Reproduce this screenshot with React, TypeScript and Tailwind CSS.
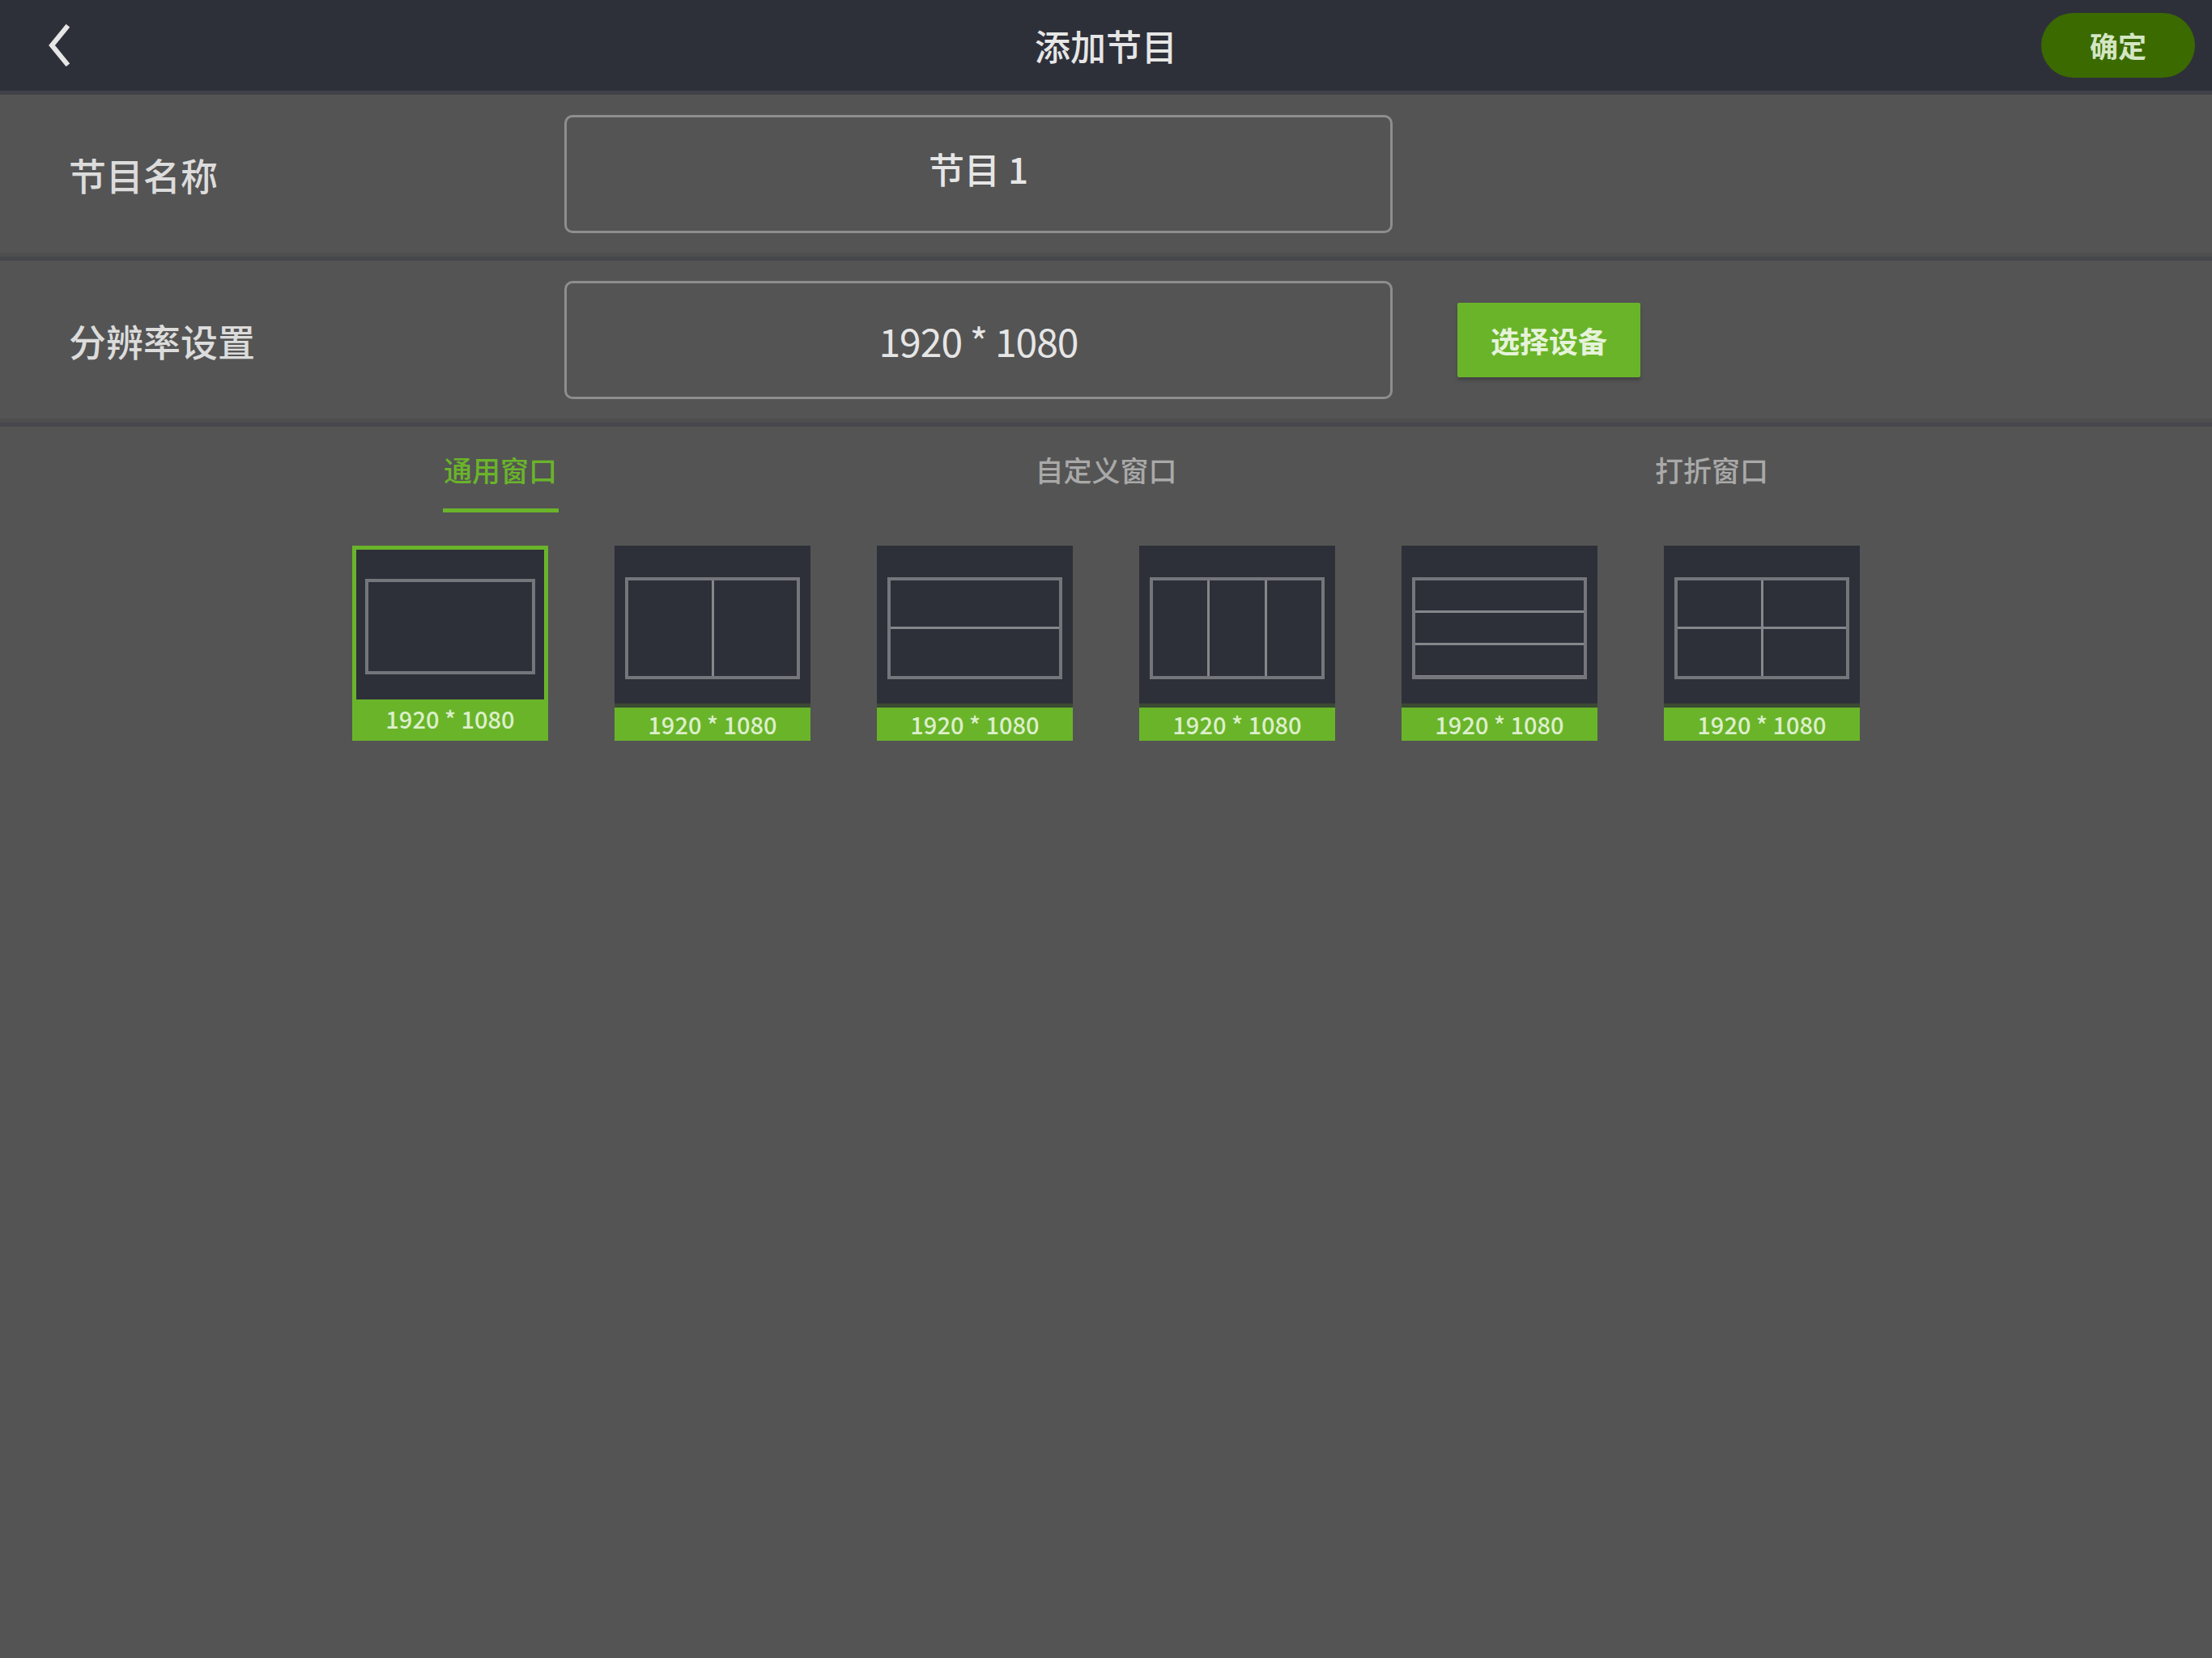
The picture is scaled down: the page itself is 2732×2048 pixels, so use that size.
import React, { useState } from 'react';

type Layout = 'single' | 'cols2' | 'rows2' | 'cols3' | 'rows3' | 'grid4';

const layouts: { id: Layout; cells: number; grid: string }[] = [
    { id: 'single', cells: 1, grid: 'grid-cols-1 grid-rows-1' },
    { id: 'cols2', cells: 2, grid: 'grid-cols-2 grid-rows-1' },
    { id: 'rows2', cells: 2, grid: 'grid-cols-1 grid-rows-2' },
    { id: 'cols3', cells: 3, grid: 'grid-cols-3 grid-rows-1' },
    { id: 'rows3', cells: 3, grid: 'grid-cols-1 grid-rows-3' },
    { id: 'grid4', cells: 4, grid: 'grid-cols-2 grid-rows-2' },
];

const tabs = ['通用窗口', '自定义窗口', '打折窗口'];

const LayoutCard = ({ layout, selected, onClick }: { layout: typeof layouts[number]; selected: boolean; onClick: () => void }) => {
    const rect = (
        <div className={`grid ${layout.grid} gap-[3px] bg-[#86878c] border-[4px] border-[#75767c] ${selected ? 'w-[210px] h-[118px]' : 'w-[216px] h-[126px]'}`}>
            {Array.from({ length: layout.cells }).map((_, i) => (
                <div key={i} className="bg-[#2e3039]" />
            ))}
        </div>
    );

    if (selected) {
        return (
            <button onClick={onClick} className="w-[242px] h-[241px] bg-[#6ab42a] px-[5px] pt-[5px] flex flex-col">
                <div className="h-[185px] bg-[#2e3039] flex items-center justify-center pt-[4px]">{rect}</div>
                <div className="flex-1 flex items-center justify-center text-[29px] font-medium leading-none text-[#dcefcb] pb-[4px]">1920 * 1080</div>
            </button>
        );
    }

    return (
        <button onClick={onClick} className="w-[242px] h-[241px] flex flex-col">
            <div className="h-[195px] bg-[#2e3039] flex items-center justify-center pt-[8px]">{rect}</div>
            <div className="h-[5px] bg-[#3b4a33]" />
            <div className="flex-1 bg-[#6ab42a] flex items-center justify-center text-[29px] font-medium leading-none text-[#dcefcb]">1920 * 1080</div>
        </button>
    );
};

export default function App() {
    const [activeTab, setActiveTab] = useState(0);
    const [selected, setSelected] = useState<Layout>('single');

    return (
        <div className="w-[2732px] h-[2048px] bg-[#545454] font-['Noto_Sans_CJK_SC','Noto_Sans',sans-serif] overflow-hidden">
            {/* Header */}
            <header className="h-[117px] bg-[#2e3039] border-b-[5px] border-[#404149] grid grid-cols-[1fr_auto_1fr] items-center">
                <button className="justify-self-start ml-[54px] w-[36px] h-[60px] flex items-center justify-center">
                    <svg width="30" height="52" viewBox="0 0 30 52" fill="none">
                        <polyline points="25,4 7,26 25,48" stroke="#e6e6e6" strokeWidth="6" strokeLinecap="square" />
                    </svg>
                </button>
                <h1 className="text-[44px] leading-none text-[#e6e6e6] font-medium">添加节目</h1>
                <button className="justify-self-end mr-[21px] w-[190px] h-[80px] rounded-full bg-[#3b6a00] text-[35px] font-bold text-[#d4e6c2]">
                    确定
                </button>
            </header>

            {/* Program name */}
            <div className="h-[195px] flex items-center">
                <span className="w-[697px] pl-[85px] text-[46px] font-medium text-[#dcdcdc] leading-none">节目名称</span>
                <div className="w-[1023px] h-[146px] border-[3px] border-[#8e8e8e] rounded-[10px] flex items-center justify-center pb-[14px]">
                    <span className="text-[44px] font-medium text-[#e6e6e6] leading-none">节目 1</span>
                </div>
            </div>
            <div className="h-[5px] bg-[#4e4e4e]" />
            <div className="h-[5px] bg-[#46474c]" />

            {/* Resolution */}
            <div className="h-[195px] flex items-center">
                <span className="w-[697px] pl-[85px] text-[46px] font-medium text-[#dcdcdc] leading-none">分辨率设置</span>
                <div className="w-[1023px] h-[146px] border-[3px] border-[#8e8e8e] rounded-[10px] flex items-center justify-center">
                    <span className="text-[48px] text-[#e6e6e6] leading-none tracking-[-1px]">1920 * 1080</span>
                </div>
                <button className="ml-[80px] w-[226px] h-[92px] bg-[#6ab42a] rounded-[2px] shadow-[0_4px_4px_rgba(0,0,0,0.2)] text-[36px] font-bold text-[#e6f3da]">
                    选择设备
                </button>
            </div>
            <div className="h-[5px] bg-[#4e4e4e]" />
            <div className="h-[5px] bg-[#46474c]" />

            {/* Tabs */}
            <div className="w-[2244px] mx-auto grid grid-cols-3 pt-[33px]">
                {tabs.map((tab, i) => (
                    <button key={tab} onClick={() => setActiveTab(i)} className="flex flex-col items-center">
                        <span className={`text-[35px] font-medium leading-[40px] ${activeTab === i ? 'text-[#6ab42a]' : 'text-[#a9a9a9]'}`}>{tab}</span>
                        <span className={`mt-[28px] h-[5px] w-[143px] ${activeTab === i ? 'bg-[#6ab42a]' : 'bg-transparent'}`} />
                    </button>
                ))}
            </div>

            {/* Layouts */}
            <div className="mt-[41px] flex justify-center gap-[82px]">
                {layouts.map(l => (
                    <LayoutCard key={l.id} layout={l} selected={selected === l.id} onClick={() => setSelected(l.id)} />
                ))}
            </div>
        </div>
    );
}
